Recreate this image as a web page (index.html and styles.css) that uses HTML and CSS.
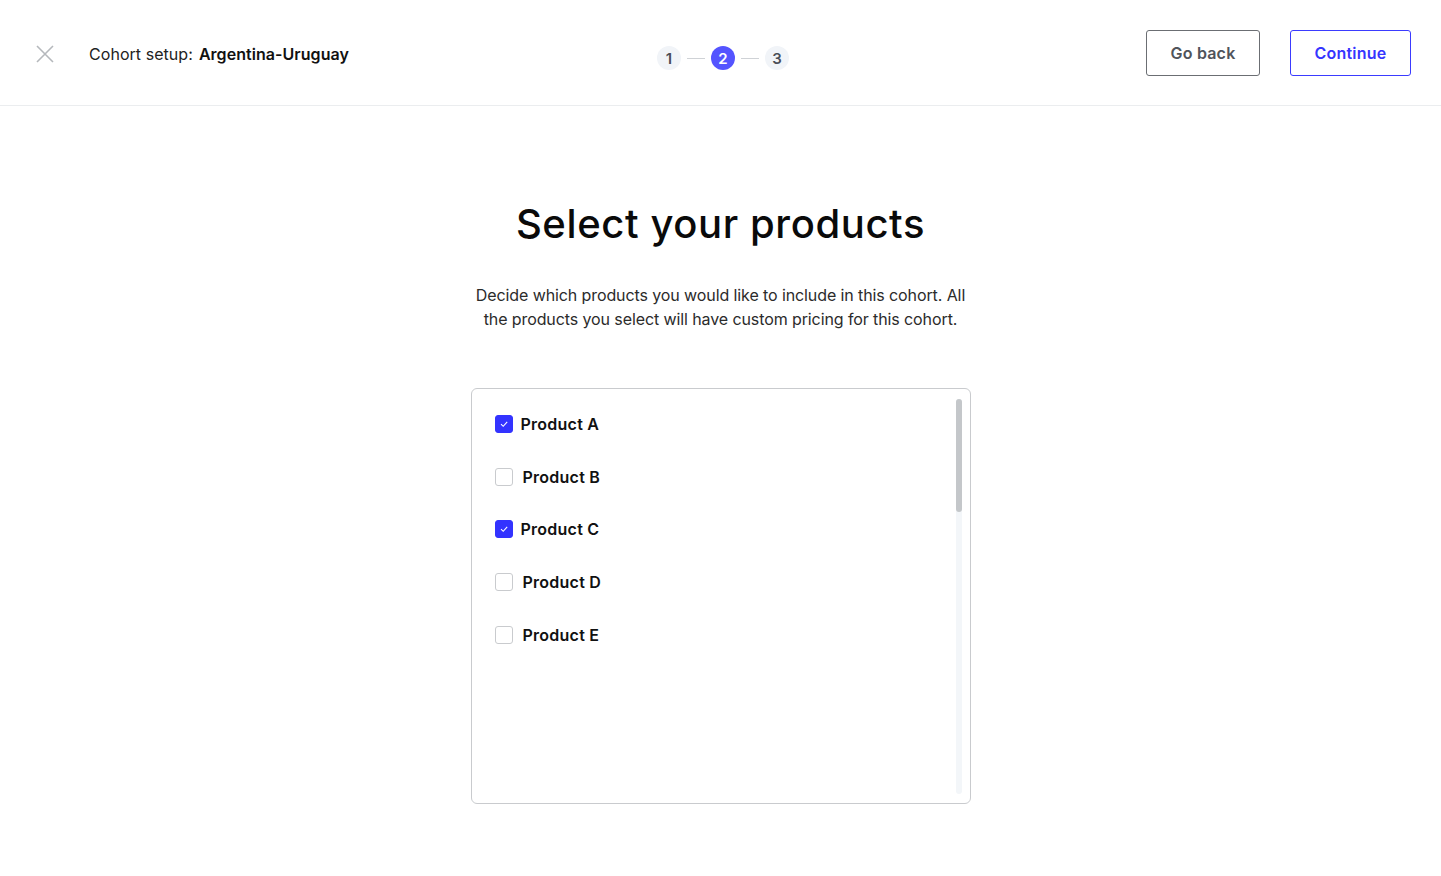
FILE: index.html
```html
<!DOCTYPE html>
<html lang="en">
<head>
<meta charset="utf-8">
<title>Cohort setup</title>
<link rel="stylesheet" href="styles.css">
</head>
<body>
<header class="topbar">
  <div class="topbar-left">
    <button class="close-btn" aria-label="Close">
      <svg width="20" height="20" viewBox="0 0 20 20"><path d="M2 2 L18 18 M18 2 L2 18" stroke="#b5b8bc" stroke-width="1.6" fill="none"/></svg>
    </button>
    <div class="crumb"><span class="crumb-label">Cohort setup:</span><span class="crumb-name">Argentina-Uruguay</span></div>
  </div>
  <div class="stepper">
    <span class="step">1</span>
    <span class="step-line"></span>
    <span class="step active">2</span>
    <span class="step-line"></span>
    <span class="step">3</span>
  </div>
  <div class="topbar-right">
    <button class="btn btn-back">Go back</button>
    <button class="btn btn-continue">Continue</button>
  </div>
</header>
<main class="content">
  <h1 class="title">Select your products</h1>
  <p class="lead">Decide which products you would like to include in this cohort. All the products you select will have custom pricing for this cohort.</p>
  <div class="list">
    <ul class="items">
      <li class="item checked"><span class="box"><svg width="10" height="10" viewBox="0 0 10 10"><path d="M2 5.2 L4.2 7.3 L8.2 2.8" stroke="#fff" stroke-width="1.1" fill="none"/></svg></span><span class="label">Product A</span></li>
      <li class="item"><span class="box"></span><span class="label">Product B</span></li>
      <li class="item checked"><span class="box"><svg width="10" height="10" viewBox="0 0 10 10"><path d="M2 5.2 L4.2 7.3 L8.2 2.8" stroke="#fff" stroke-width="1.1" fill="none"/></svg></span><span class="label">Product C</span></li>
      <li class="item"><span class="box"></span><span class="label">Product D</span></li>
      <li class="item"><span class="box"></span><span class="label">Product E</span></li>
    </ul>
    <div class="scroll-track"><div class="scroll-thumb"></div></div>
  </div>
</main>
</body>
</html>
```
FILE: styles.css
```css
* { box-sizing: border-box; }
html, body { margin: 0; padding: 0; background: #fff; }
body {
  font-family: Inter, "Noto Sans", "Liberation Sans", sans-serif;
  color: #111;
  width: 1441px;
  height: 876px;
  overflow: hidden;
}
button { font-family: inherit; }

.topbar {
  height: 106px;
  border-bottom: 1px solid #ebedef;
  display: flex;
  align-items: center;
  justify-content: space-between;
  padding: 0 30px 0 35px;
  position: relative;
}
.topbar-left { display: flex; align-items: center; gap: 34px; width: 400px; padding-top: 2px; }
.close-btn {
  background: none; border: 0; padding: 0; width: 20px; height: 20px;
  display: flex; align-items: center; justify-content: center; cursor: pointer;
}
.crumb { font-size: 16px; letter-spacing: 0.05px; }
.crumb-label { color: #222; margin-right: 6px; }
.crumb-name { font-weight: 600; color: #111; }

.stepper {
  display: flex; align-items: center; gap: 6px;
  position: absolute; left: 657px; top: 46px;
}
.step {
  width: 24px; height: 24px; border-radius: 50%;
  background: #f1f4f8; color: #4a4f57;
  font-size: 15px; font-weight: 600;
  display: flex; align-items: center; justify-content: center;
}
.step.active { background: #5454ff; color: #fff; }
.step-line { width: 18px; height: 1px; background: #cfd2d6; }

.topbar-right { display: flex; gap: 30px; }
.btn {
  height: 46px; border-radius: 3px; background: #fff;
  font-size: 16px; font-weight: 600; cursor: pointer; letter-spacing: 0.2px;
}
.btn-back { width: 114px; border: 1px solid #6b6e73; color: #50545b; }
.btn-continue { width: 121px; border: 1px solid #3b3bff; color: #3535ff; }

.content { display: flex; flex-direction: column; align-items: center; }
.title {
  margin: 94px 0 0;
  font-size: 40px; font-weight: 500; line-height: 48px;
  letter-spacing: 0.6px; color: #0a0a0a;
}
.lead {
  margin: 35px 0 0;
  width: 500px; text-align: center;
  font-size: 16px; line-height: 24px; color: #2b2b2b;
  letter-spacing: -0.1px;
}
.list {
  margin-top: 57px;
  width: 500px; height: 416px;
  border: 1px solid #c9cbce; border-radius: 6px;
  display: flex; justify-content: space-between;
  padding: 10px 8px 9px 23px;
}
.items { list-style: none; margin: 0; padding: 16px 0 0; display: flex; flex-direction: column; gap: 34.7px; }
.item { display: flex; align-items: center; height: 18px; font-size: 16px; font-weight: 600; color: #111; letter-spacing: 0.25px; }
.box {
  width: 18px; height: 18px; border-radius: 3px;
  border: 1px solid #c9cbce; background: #fff;
  display: flex; align-items: center; justify-content: center;
  margin-right: 10px;
}
.item.checked .box { background: #3333ff; border-color: #3333ff; margin-right: 8px; }
.scroll-track { width: 6px; height: 100%; background: #f3f6f9; border-radius: 3px; }
.scroll-thumb { width: 6px; height: 113px; background: #c4c7ca; border-radius: 3px; }
```
